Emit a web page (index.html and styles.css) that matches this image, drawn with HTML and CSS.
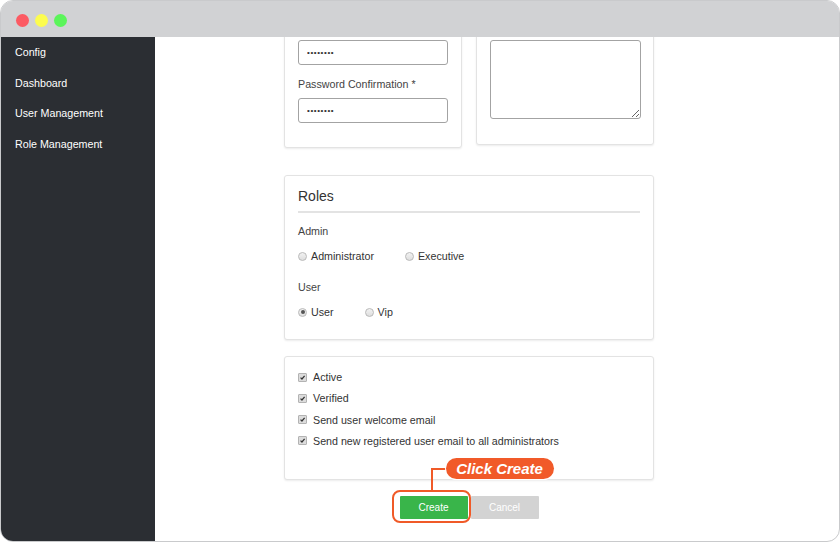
FILE: index.html
```html
<!DOCTYPE html>
<html lang="en">
<head>
<meta charset="utf-8">
<title>Create User</title>
<link rel="stylesheet" href="styles.css">
</head>
<body>
<div class="window">
  <div class="titlebar">
    <span class="dot dot-red"></span>
    <span class="dot dot-yellow"></span>
    <span class="dot dot-green"></span>
  </div>
  <div class="frame">
    <nav class="sidebar">
      <a class="nav-item">Config</a>
      <a class="nav-item">Dashboard</a>
      <a class="nav-item">User Management</a>
      <a class="nav-item">Role Management</a>
    </nav>
    <main class="main">
      <form class="form">
        <div class="row">
          <section class="card card-half card-pass">
            <input class="text-input" type="password" value="password" aria-label="Password" readonly>
            <label class="field-label field-gap">Password Confirmation <span class="req">*</span></label>
            <input class="text-input" type="password" value="password" aria-label="Password Confirmation" readonly>
          </section>
          <section class="card card-half card-notes">
            <textarea class="text-area" aria-label="Notes" readonly></textarea>
          </section>
        </div>

        <section class="card card-roles">
          <h3 class="card-title">Roles</h3>
          <div class="group-label">Admin</div>
          <div class="option-row">
            <span class="option"><span class="radio"></span>Administrator</span>
            <span class="option"><span class="radio"></span>Executive</span>
          </div>
          <div class="group-label group-gap">User</div>
          <div class="option-row">
            <span class="option"><span class="radio radio-on"></span>User</span>
            <span class="option"><span class="radio"></span>Vip</span>
          </div>
        </section>

        <section class="card card-flags">
          <div class="check"><span class="box"><svg viewBox="0 0 9 9"><path d="M2 4.6 L3.8 6.4 L7.2 2.4"/></svg></span>Active</div>
          <div class="check"><span class="box"><svg viewBox="0 0 9 9"><path d="M2 4.6 L3.8 6.4 L7.2 2.4"/></svg></span>Verified</div>
          <div class="check"><span class="box"><svg viewBox="0 0 9 9"><path d="M2 4.6 L3.8 6.4 L7.2 2.4"/></svg></span>Send user welcome email</div>
          <div class="check"><span class="box"><svg viewBox="0 0 9 9"><path d="M2 4.6 L3.8 6.4 L7.2 2.4"/></svg></span>Send new registered user email to all administrators</div>
        </section>

        <div class="actions">
          <span class="btn-wrap">
            <button type="button" class="btn btn-create">Create</button>
            <span class="ring"></span>
            <span class="connector"></span>
            <span class="tag">Click Create</span>
          </span>
          <button type="button" class="btn btn-cancel">Cancel</button>
        </div>
      </form>
    </main>
  </div>
</div>
</body>
</html>
```

FILE: styles.css
```css
* { box-sizing: border-box; }

html, body {
  margin: 0;
  padding: 0;
  background: #ffffff;
  font-family: "Liberation Sans", Arial, sans-serif;
}

.window {
  width: 840px;
  height: 542px;
  border: 1px solid #c9cacc;
  border-radius: 13px;
  overflow: hidden;
  display: flex;
  flex-direction: column;
  background: #ffffff;
}

/* title bar with the three window buttons */
.titlebar {
  height: 36px;
  flex: none;
  background: #d1d2d4;
  display: flex;
  align-items: center;
  gap: 6px;
  padding-left: 15px;
  padding-top: 2px;
}
.dot {
  width: 13px;
  height: 13px;
  border-radius: 50%;
}
.dot-red { background: #fc5a63; }
.dot-yellow { background: #fcfc4f; }
.dot-green { background: #5bf55a; }

.frame {
  flex: 1;
  display: flex;
  min-height: 0;
}

/* left navigation */
.sidebar {
  width: 154px;
  flex: none;
  background: #2b2e33;
  display: flex;
  flex-direction: column;
}
.nav-item {
  display: block;
  height: 30.5px;
  line-height: 30.5px;
  padding-left: 14px;
  color: #ffffff;
  font-size: 10.7px;
}

/* scrolled form area */
.main {
  flex: 1;
  overflow: hidden;
  padding-left: 129px;
}
.form {
  width: 370px;
  margin-top: -32px;
}
.row {
  display: flex;
  gap: 14px;
  align-items: flex-start;
}

.card {
  background: #ffffff;
  border: 1px solid #e3e3e3;
  border-radius: 3px;
  box-shadow: 0 1px 2px rgba(0, 0, 0, 0.08);
}
.card-half {
  width: 178px;
  padding: 34px 13px 24px;
}
.card-notes { padding-bottom: 25px; }

.field-label {
  display: block;
  font-size: 10.7px;
  line-height: 14px;
  color: #444444;
  margin-bottom: 7px;
}
.field-gap { margin-top: 12px; }
.req { color: #444444; }

.text-input {
  display: block;
  width: 150px;
  height: 25px;
  border: 1px solid #a3a3a3;
  border-radius: 3px;
  padding: 0 8px;
  font-family: "Liberation Sans", Arial, sans-serif;
  font-size: 8px;
  letter-spacing: 0.6px;
  color: #333333;
  background: #ffffff;
  outline: none;
}
.text-area {
  display: block;
  width: 151px;
  height: 79px;
  border: 1px solid #a3a3a3;
  border-radius: 3px;
  resize: vertical;
  background: #ffffff;
  outline: none;
}

/* roles */
.card-roles {
  margin-top: 27px;
  padding: 13px 13px 20px;
}
.card-title {
  margin: 0;
  font-size: 14px;
  font-weight: normal;
  line-height: 14px;
  color: #333333;
  padding-bottom: 8px;
  border-bottom: 2px solid #e3e3e3;
}
.group-label {
  font-size: 10.7px;
  line-height: 14px;
  color: #444444;
  margin-top: 11px;
}
.group-gap { margin-top: 17px; }

.option-row {
  display: flex;
  gap: 31px;
  margin-top: 11px;
  font-size: 10.7px;
  line-height: 14px;
  color: #333333;
}
.option {
  display: flex;
  align-items: center;
}
.radio {
  width: 9px;
  height: 9px;
  border-radius: 50%;
  border: 1px solid #b9b9b9;
  background: linear-gradient(#f2f2f2, #dedede);
  margin-right: 4px;
  position: relative;
}
.radio-on::after {
  content: "";
  position: absolute;
  left: 1.5px;
  top: 1.5px;
  width: 4px;
  height: 4px;
  border-radius: 50%;
  background: #555555;
}

/* flags */
.card-flags {
  margin-top: 16px;
  padding: 13px 13px 31px;
  display: flex;
  flex-direction: column;
  gap: 7.33px;
}
.check {
  display: flex;
  align-items: center;
  font-size: 10.7px;
  line-height: 14px;
  color: #333333;
}
.box {
  width: 9px;
  height: 9px;
  border: 1px solid #b3b3b3;
  border-radius: 1px;
  background: #dcdcdc;
  margin-right: 6px;
  display: flex;
}
.box svg {
  width: 7px;
  height: 7px;
  fill: none;
  stroke: #333333;
  stroke-width: 1.6;
}

/* buttons */
.actions {
  margin-top: 16px;
  display: flex;
  justify-content: center;
  gap: 3px;
}
.btn {
  width: 68px;
  height: 23px;
  border: none;
  border-radius: 1px;
  color: #ffffff;
  font-family: "Liberation Sans", Arial, sans-serif;
  font-size: 10px;
  padding: 0;
}
.btn-create { background: #39b54a; }
.btn-cancel { background: #d3d3d3; }

.btn-wrap {
  position: relative;
  display: flex;
}

/* call-out pointing at the create button */
.ring {
  position: absolute;
  left: -8px;
  top: -6px;
  right: -3px;
  bottom: -4px;
  border: 2px solid #f05a28;
  border-radius: 8px;
  pointer-events: none;
}
.connector {
  position: absolute;
  left: 31px;
  top: -28px;
  width: 16px;
  height: 22px;
  border-left: 2px solid #f05a28;
  border-top: 2px solid #f05a28;
}
.tag {
  position: absolute;
  left: 46px;
  top: -38px;
  width: 108px;
  height: 21px;
  border-radius: 11px;
  background: #f15a29;
  box-shadow: 0 0 0 1px #ffffff;
  color: #ffffff;
  font-size: 15px;
  font-weight: bold;
  font-style: italic;
  line-height: 21px;
  text-align: center;
  white-space: nowrap;
}
```
